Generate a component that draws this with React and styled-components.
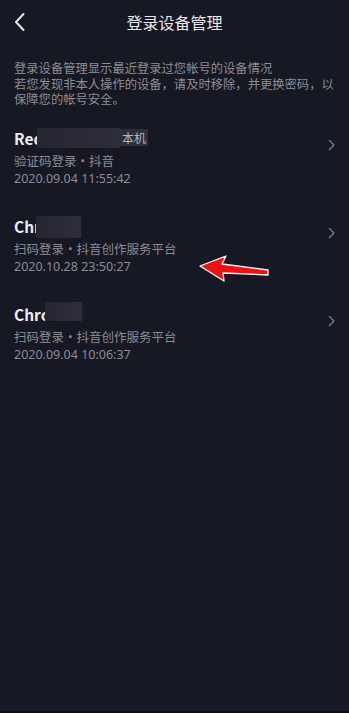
import React from "react";
import styled, { createGlobalStyle } from "styled-components";

const Global = createGlobalStyle`
  html, body { margin: 0; padding: 0; background: #161823; }
  body { font-family: "Noto Sans CJK SC", "Noto Sans", sans-serif; }
`;

const Page = styled.div`
  position: relative;
  width: 349px;
  height: 713px;
  background: #161823;
  display: flex;
  flex-direction: column;
  overflow: hidden;
`;

const Header = styled.div`
  height: 44px;
  display: flex;
  align-items: center;
  justify-content: center;
  position: relative;
`;

const BackBtn = styled.div`
  position: absolute;
  left: 13px;
  top: 11px;
  width: 16px;
  height: 22px;
  display: flex;
  align-items: center;
`;

const Title = styled.div`
  color: #e9e9eb;
  font-size: 16px;
  line-height: 20px;
  margin-top: -1px;
`;

const Notice = styled.div`
  padding: 17px 0 0 14px;
  color: #8d8e94;
  font-size: 12.3px;
  line-height: 15.5px;
  white-space: nowrap;
`;

const List = styled.div`
  display: flex;
  flex-direction: column;
  padding-top: 18px;
`;

const Item = styled.div`
  position: relative;
  display: flex;
  align-items: flex-start;
  padding: 0 14px;
  height: 88px;
`;

const Info = styled.div`
  flex: 1;
  display: flex;
  flex-direction: column;
`;

const NameRow = styled.div`
  position: relative;
  display: flex;
  align-items: center;
  height: 24px;
`;

const Name = styled.span`
  white-space: nowrap;
  color: #ececee;
  font-family: "Noto Sans CJK SC", "Noto Sans", sans-serif;
  font-weight: 700;
  font-size: 15.5px;
  line-height: 24px;
`;

const Blur = styled.span`
  position: absolute;
  top: ${(p) => p.$top}px;
  left: ${(p) => p.$left}px;
  width: ${(p) => p.$w}px;
  height: ${(p) => p.$h}px;
  background: linear-gradient(90deg, #252632, #2a2b37 60%, #2d2e3a);
`;

const Tag = styled.span`
  position: absolute;
  left: ${(p) => p.$left}px;
  top: 3px;
  height: 17px;
  padding: 0 2px;
  background: #2e2f39;
  color: #b5b6bb;
  font-size: 12px;
  line-height: 17px;
`;

const Sub = styled.div`
  color: #8b8c92;
  font-size: 12.5px;
  line-height: 18px;
  margin-top: 2px;
`;

const Time = styled.div`
  color: #8b8c92;
  font-family: "Noto Sans", sans-serif;
  font-size: 12.5px;
  line-height: 18px;
`;

const Chevron = styled.div`
  position: absolute;
  right: 13px;
  top: 6px;
  width: 8px;
  height: 12px;
`;

const ArrowMark = styled.svg`
  position: absolute;
  left: 196px;
  top: 252px;
`;

const BottomBar = styled.div`
  margin-top: auto;
  height: 2px;
  background: #0c0d12;
`;

const RightChevron = () => (
  <Chevron>
    <svg width="8" height="12" viewBox="0 0 8 12">
      <path d="M1.5 1.5 L6 6 L1.5 10.5" fill="none" stroke="#7d7e85" strokeWidth="1.4" strokeLinecap="round" strokeLinejoin="round" />
    </svg>
  </Chevron>
);

const devices = [
  { name: "Red", sub: "验证码登录・抖音", time: "2020.09.04 11:55:42", blur: { left: 23, top: -2, w: 83, h: 20 }, tag: 106 },
  { name: "Chr", sub: "扫码登录・抖音创作服务平台", time: "2020.10.28 23:50:27", blur: { left: 22, top: -2, w: 45, h: 22 } },
  { name: "Chrome", sub: "扫码登录・抖音创作服务平台", time: "2020.09.04 10:06:37", blur: { left: 31, top: -4, w: 37, h: 19 } },
];

export default function App() {
  return (
    <>
      <Global />
      <Page>
        <Header>
          <BackBtn>
            <svg width="14" height="20" viewBox="0 0 14 20">
              <path d="M10.5 2 L3 10 L10.5 18" fill="none" stroke="#e6e6e8" strokeWidth="2" strokeLinecap="round" strokeLinejoin="round" />
            </svg>
          </BackBtn>
          <Title>登录设备管理</Title>
        </Header>
        <Notice>
          登录设备管理显示最近登录过您帐号的设备情况
          <br />
          若您发现非本人操作的设备，请及时移除，并更换密码，以
          <br />
          保障您的帐号安全。
        </Notice>
        <List>
          {devices.map((d, i) => (
            <Item key={i}>
              <Info>
                <NameRow>
                  <Name>{d.name}</Name>
                  <Blur $left={d.blur.left} $top={d.blur.top + 4} $w={d.blur.w} $h={d.blur.h} />
                  {d.tag && <Tag $left={d.tag}>本机</Tag>}
                </NameRow>
                <Sub>{d.sub}</Sub>
                <Time>{d.time}</Time>
              </Info>
              <RightChevron />
            </Item>
          ))}
        </List>
        <BottomBar />
        <ArrowMark width="76" height="32" viewBox="196 252 76 32">
          <polygon
            points="200,266 226,256 222,264 268,270 268,275 223,273 224,281"
            fill="#f01010"
            stroke="#ffffff"
            strokeWidth="1.3"
            strokeLinejoin="round"
          />
        </ArrowMark>
      </Page>
    </>
  );
}
